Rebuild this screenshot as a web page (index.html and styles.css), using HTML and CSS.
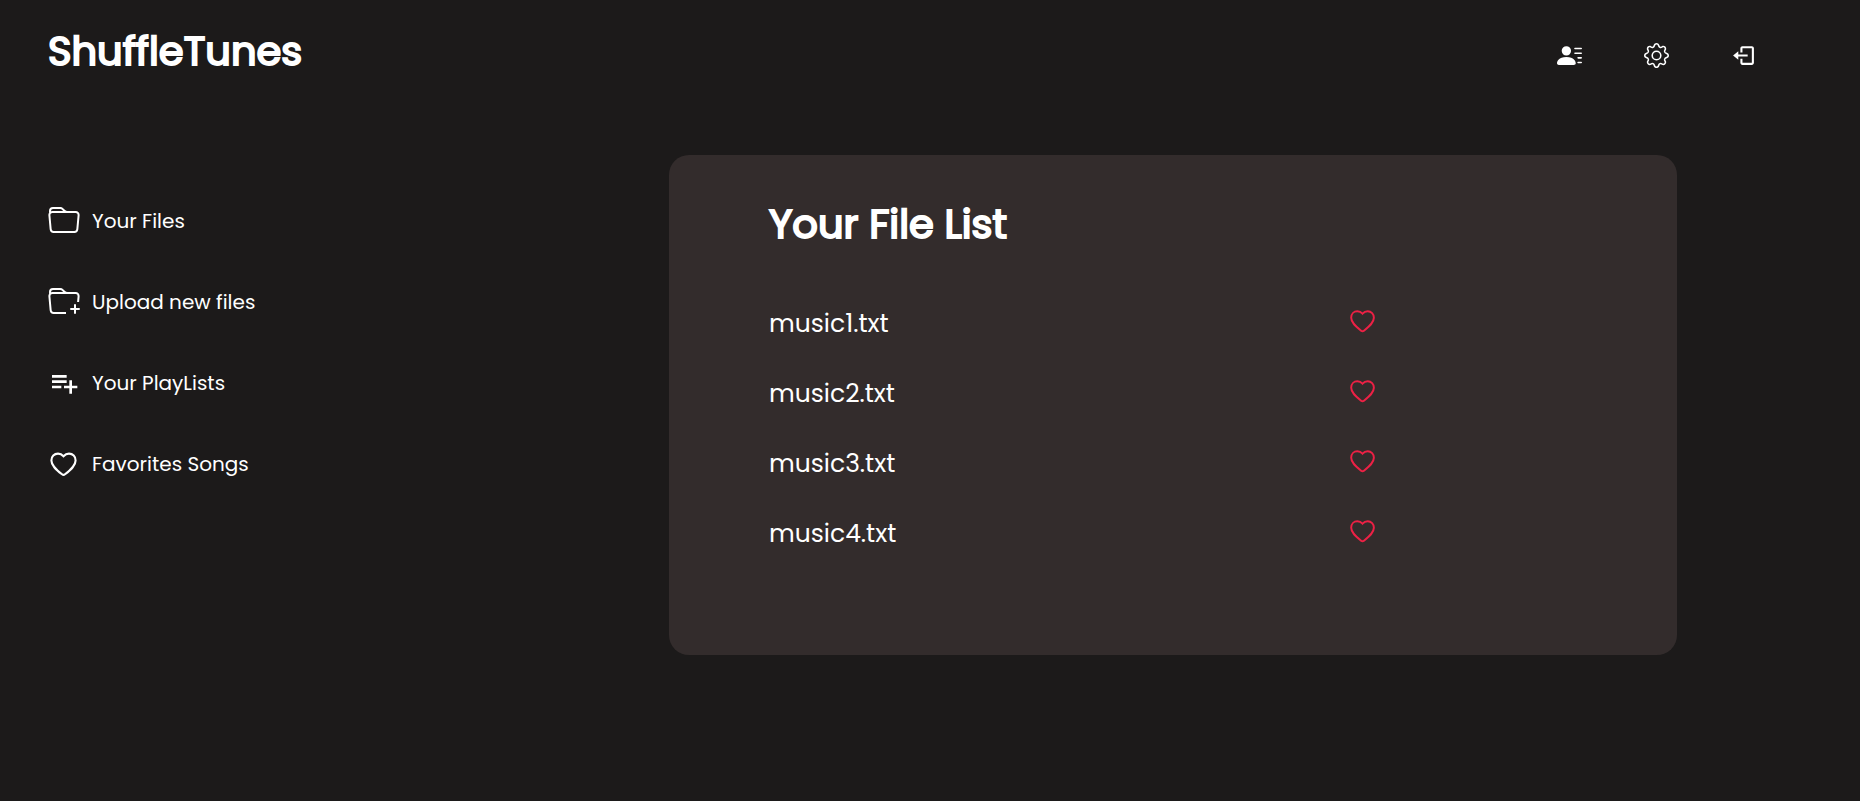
FILE: index.html
```html
<!DOCTYPE html>
<html lang="en">
<head>
<meta charset="utf-8">
<meta name="viewport" content="width=device-width, initial-scale=1">
<title>ShuffleTunes</title>
<link rel="stylesheet" href="styles.css">
</head>
<body>
<svg class="sprite" aria-hidden="true">
  <symbol id="heart" viewBox="0 0 32 32"><path fill="none" stroke="currentColor" stroke-width="2.1" d="M15.5 8.2C13.7 6.2 11.7 5.6 10 5.6C6.2 5.6 3.4 8.5 3.4 12.4C3.4 17.5 8 21.5 14 26.3Q15.5 27.5 17 26.3C23 21.5 27.6 17.5 27.6 12.4C27.6 8.5 24.8 5.6 21 5.6C19.3 5.6 17.3 6.2 15.5 8.2z"/></symbol>
</svg>
<header class="topbar">
  <h1 class="brand">ShuffleTunes</h1>
  <div class="actions">
    <button class="icon-button" type="button" aria-label="Profile">
      <svg class="icon" viewBox="0 0 16 16"><path d="M6 8a3 3 0 1 0 0-6 3 3 0 0 0 0 6m-5 6s-1 0-1-1 1-4 6-4 6 3 6 4-1 1-1 1zM11 3.5a.5.5 0 0 1 .5-.5h4a.5.5 0 0 1 0 1h-4a.5.5 0 0 1-.5-.5m.5 2.5a.5.5 0 0 0 0 1h4a.5.5 0 0 0 0-1zm2 3a.5.5 0 0 0 0 1h2a.5.5 0 0 0 0-1zm0 3a.5.5 0 0 0 0 1h2a.5.5 0 0 0 0-1z"/></svg>
    </button>
    <button class="icon-button" type="button" aria-label="Settings">
      <svg class="icon" viewBox="0 0 16 16"><path d="M8 4.754a3.246 3.246 0 1 0 0 6.492 3.246 3.246 0 0 0 0-6.492M5.754 8a2.246 2.246 0 1 1 4.492 0 2.246 2.246 0 0 1-4.492 0"/><path d="M9.796 1.343c-.527-1.79-3.065-1.79-3.592 0l-.094.319a.873.873 0 0 1-1.255.52l-.292-.16c-1.64-.892-3.433.902-2.54 2.541l.159.292a.873.873 0 0 1-.52 1.255l-.319.094c-1.79.527-1.79 3.065 0 3.592l.319.094a.873.873 0 0 1 .52 1.255l-.16.292c-.892 1.64.901 3.434 2.541 2.54l.292-.159a.873.873 0 0 1 1.255.52l.094.319c.527 1.79 3.065 1.79 3.592 0l.094-.319a.873.873 0 0 1 1.255-.52l.292.16c1.64.893 3.434-.902 2.54-2.541l-.159-.292a.873.873 0 0 1 .52-1.255l.319-.094c1.79-.527 1.79-3.065 0-3.592l-.319-.094a.873.873 0 0 1-.52-1.255l.16-.292c.893-1.64-.902-3.433-2.541-2.54l-.292.159a.873.873 0 0 1-1.255-.52zm-2.633.283c.246-.835 1.428-.835 1.674 0l.094.319a1.873 1.873 0 0 0 2.693 1.115l.291-.16c.764-.415 1.6.42 1.184 1.185l-.159.292a1.873 1.873 0 0 0 1.116 2.692l.318.094c.835.246.835 1.428 0 1.674l-.319.094a1.873 1.873 0 0 0-1.115 2.693l.16.291c.415.764-.42 1.6-1.185 1.184l-.291-.159a1.873 1.873 0 0 0-2.693 1.116l-.094.318c-.246.835-1.428.835-1.674 0l-.094-.319a1.873 1.873 0 0 0-2.692-1.115l-.292.16c-.764.415-1.6-.42-1.184-1.185l.159-.291A1.873 1.873 0 0 0 1.945 8.93l-.319-.094c-.835-.246-.835-1.428 0-1.674l.319-.094A1.873 1.873 0 0 0 3.06 4.377l-.16-.292c-.415-.764.42-1.6 1.185-1.184l.292.159a1.873 1.873 0 0 0 2.692-1.115z"/></svg>
    </button>
    <button class="icon-button" type="button" aria-label="Log out">
      <svg class="icon" viewBox="0 0 24 24"><path d="m2 12 5 4v-3h9v-2H7V8z"/><path d="M20 3h-9c-1.103 0-2 .897-2 2v4h2V5h9v14h-9v-4H9v4c0 1.103.897 2 2 2h9c1.103 0 2-.897 2-2V5c0-1.103-.897-2-2-2z"/></svg>
    </button>
  </div>
</header>
<div class="layout">
  <nav class="sidebar" aria-label="Library">
    <a class="nav-link" href="#files">
      <svg class="icon nav-icon" viewBox="0 0 16 16" aria-hidden="true"><path d="M.54 3.87.5 3a2 2 0 0 1 2-2h3.672a2 2 0 0 1 1.414.586l.828.828A2 2 0 0 0 9.828 3h3.982a2 2 0 0 1 1.992 2.181l-.637 7A2 2 0 0 1 13.174 14H2.826a2 2 0 0 1-1.991-1.819l-.637-7a2 2 0 0 1 .342-1.31zM2.19 4a1 1 0 0 0-.996 1.09l.637 7a1 1 0 0 0 .995.91h10.348a1 1 0 0 0 .995-.91l.637-7A1 1 0 0 0 13.81 4zm4.69-1.707A1 1 0 0 0 6.172 2H2.5a1 1 0 0 0-1 .981l.006.139q.323-.119.684-.12h5.396z"/></svg>
      <span>Your Files</span>
    </a>
    <a class="nav-link" href="#upload">
      <svg class="icon nav-icon" viewBox="0 0 16 16" aria-hidden="true"><path d="m.5 3 .04.87a2 2 0 0 0-.342 1.311l.637 7A2 2 0 0 0 2.826 14H9v-1H2.826a1 1 0 0 1-.995-.91l-.637-7A1 1 0 0 1 2.19 4h11.62a1 1 0 0 1 .996 1.09L14.54 8h1.005l.256-2.819A2 2 0 0 0 13.81 3H9.828a2 2 0 0 1-1.414-.586l-.828-.828A2 2 0 0 0 6.172 1H2.5a2 2 0 0 0-2 2m5.672-1a1 1 0 0 1 .707.293L7.586 3H2.19q-.362.002-.683.12L1.5 2.98a1 1 0 0 1 1-.98z"/><path d="M13.5 9a.5.5 0 0 1 .5.5V11h1.5a.5.5 0 1 1 0 1H14v1.5a.5.5 0 1 1-1 0V12h-1.5a.5.5 0 0 1 0-1H13V9.5a.5.5 0 0 1 .5-.5"/></svg>
      <span>Upload new files</span>
    </a>
    <a class="nav-link" href="#playlists">
      <svg class="icon nav-icon" viewBox="0 0 24 24" aria-hidden="true"><path d="M14 10H3v2h11v-2zm0-4H3v2h11V6zm4 8v-4h-2v4h-4v2h4v4h2v-4h4v-2h-4zM3 16h7v-2H3v2z"/></svg>
      <span>Your PlayLists</span>
    </a>
    <a class="nav-link" href="#favorites">
      <svg class="icon nav-icon" aria-hidden="true"><use href="#heart"/></svg>
      <span>Favorites Songs</span>
    </a>
  </nav>
  <main class="panel">
    <h2 class="panel-title">Your File List</h2>
    <ul class="file-list">
      <li class="file-row"><span>music1.txt</span><button class="icon-button like" type="button" aria-label="Favorite music1.txt"><svg class="icon"><use href="#heart"/></svg></button></li>
      <li class="file-row"><span>music2.txt</span><button class="icon-button like" type="button" aria-label="Favorite music2.txt"><svg class="icon"><use href="#heart"/></svg></button></li>
      <li class="file-row"><span>music3.txt</span><button class="icon-button like" type="button" aria-label="Favorite music3.txt"><svg class="icon"><use href="#heart"/></svg></button></li>
      <li class="file-row"><span>music4.txt</span><button class="icon-button like" type="button" aria-label="Favorite music4.txt"><svg class="icon"><use href="#heart"/></svg></button></li>
    </ul>
  </main>
</div>
</body>
</html>
```
FILE: styles.css
```css
* {
  box-sizing: border-box;
}

body {
  margin: 0;
  min-height: 100vh;
  background: #1c1a1a;
  color: #fff;
  font-family: Poppins, Inter, sans-serif;
  font-size: 20px;
}

.sprite {
  display: none;
}

.icon {
  display: block;
  width: 100%;
  height: 100%;
  fill: currentColor;
}

.icon-button {
  width: 25px;
  height: 25px;
  padding: 0;
  border: 0;
  background: none;
  color: inherit;
  cursor: pointer;
}

.topbar {
  display: flex;
  justify-content: space-between;
  align-items: flex-end;
  padding: 21px 104px 0 48px;
}

.brand,
.panel-title {
  margin: 0;
  font-size: 40px;
  font-weight: 400;
  line-height: 60px;
  -webkit-text-stroke: 2px currentColor;
}

.actions {
  display: flex;
  gap: 62px;
  padding-bottom: 13px;
}

.layout {
  display: grid;
  grid-template-columns: 669fr 1008fr;
  align-items: start;
  padding: 74px 183px 0 0;
}

.sidebar {
  display: flex;
  flex-direction: column;
  gap: 49px;
  padding: 50px 0 0 48px;
}

.nav-link {
  display: flex;
  align-items: center;
  gap: 12px;
  color: inherit;
  line-height: 32px;
  text-decoration: none;
}

.nav-icon {
  flex: none;
  width: 32px;
  height: 32px;
}

.panel {
  min-height: 500px;
  padding: 39px 100px;
  border-radius: 20px;
  background: #332c2c;
}

.file-list {
  display: flex;
  flex-direction: column;
  gap: 34px;
  margin: 0;
  padding: 52px 0 0;
  list-style: none;
}

.file-row {
  display: flex;
  justify-content: space-between;
  padding-right: 199px;
  font-size: 25px;
  line-height: 36px;
}

.like {
  width: 30px;
  height: 30px;
  color: #ed2145;
}
```
